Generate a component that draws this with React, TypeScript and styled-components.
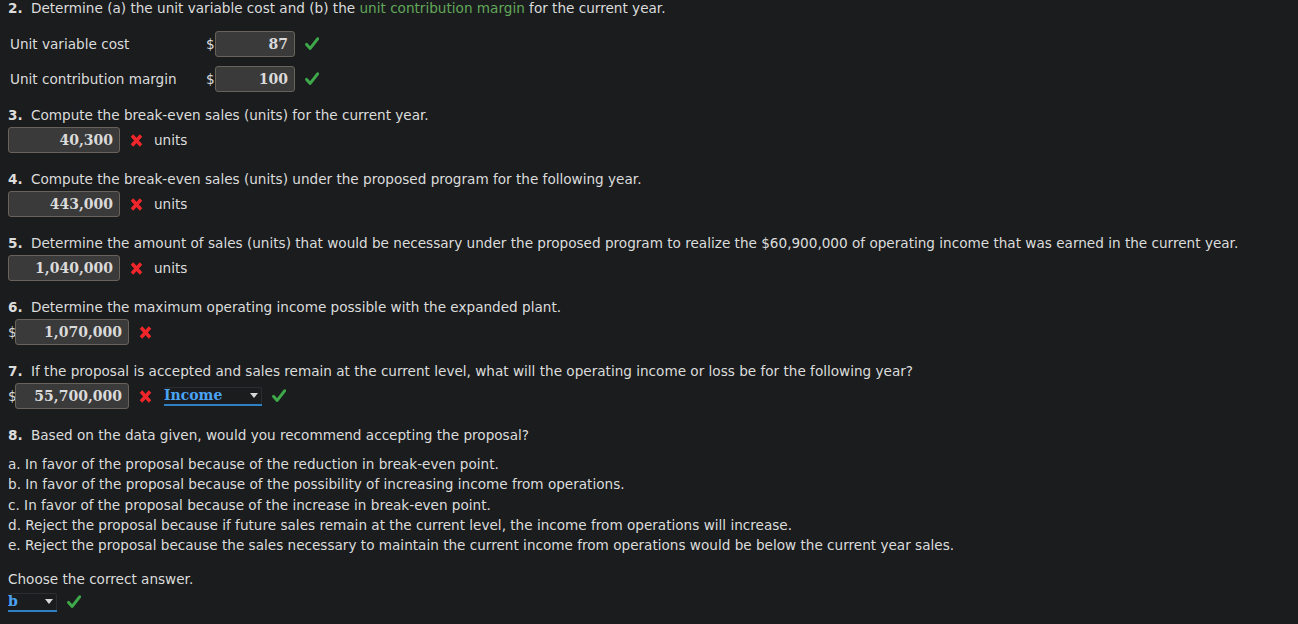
import React from "react"
import styled, { createGlobalStyle } from "styled-components"

const GlobalStyle = createGlobalStyle`
  body {
    margin: 0;
    background: #1b1c1e;
    color: #dcdcdc;
    font-family: "DejaVu Sans", Verdana, sans-serif;
    font-size: 13.6px;
  }
`

const Check = () => (
  <svg width="14" height="14" viewBox="0 0 14 14">
    <path d="M1.6 7.4 L5.2 11.4 L12.6 1.8" fill="none" stroke="#3ea84a" strokeWidth="3" strokeLinecap="round" strokeLinejoin="round" />
  </svg>
)

const Cross = () => (
  <svg width="13" height="13" viewBox="0 0 13 13">
    <path d="M2 1.5 L11 11.5 M11 1.5 L2 11.5" fill="none" stroke="#f0262a" strokeWidth="3.4" />
  </svg>
)

const App = () => {
  return (
    <>
      <GlobalStyle />
      <Page>
        <Heading>
          <Num>2.</Num> Determine (a) the unit variable cost and (b) the{" "}
          <Term>unit contribution margin</Term> for the current year.
        </Heading>
        <Table>
          <Label>Unit variable cost</Label>
          <Dollar>$</Dollar>
          <Input width={80}>87</Input>
          <Mark><Check /></Mark>
          <Label>Unit contribution margin</Label>
          <Dollar>$</Dollar>
          <Input width={80}>100</Input>
          <Mark><Check /></Mark>
        </Table>

        <Section>
          <Heading>
            <Num>3.</Num> Compute the break-even sales (units) for the current year.
          </Heading>
          <AnswerRow>
            <Input width={112}>40,300</Input>
            <Mark><Cross /></Mark>
            <Unit>units</Unit>
          </AnswerRow>
        </Section>

        <Section>
          <Heading>
            <Num>4.</Num> Compute the break-even sales (units) under the proposed program for the following year.
          </Heading>
          <AnswerRow>
            <Input width={112}>443,000</Input>
            <Mark><Cross /></Mark>
            <Unit>units</Unit>
          </AnswerRow>
        </Section>

        <Section>
          <Heading>
            <Num>5.</Num> Determine the amount of sales (units) that would be necessary under the proposed program to realize the $60,900,000 of operating income that was earned in the current year.
          </Heading>
          <AnswerRow>
            <Input width={112}>1,040,000</Input>
            <Mark><Cross /></Mark>
            <Unit>units</Unit>
          </AnswerRow>
        </Section>

        <Section>
          <Heading>
            <Num>6.</Num> Determine the maximum operating income possible with the expanded plant.
          </Heading>
          <AnswerRow>
            <SmallDollar>$</SmallDollar>
            <Input width={114}>1,070,000</Input>
            <Mark><Cross /></Mark>
          </AnswerRow>
        </Section>

        <Section>
          <Heading>
            <Num>7.</Num> If the proposal is accepted and sales remain at the current level, what will the operating income or loss be for the following year?
          </Heading>
          <AnswerRow>
            <SmallDollar>$</SmallDollar>
            <Input width={114}>55,700,000</Input>
            <Mark><Cross /></Mark>
            <Select width={98} offset={12}>
              <span>Income</span>
              <Arrow />
            </Select>
            <Mark><Check /></Mark>
          </AnswerRow>
        </Section>

        <Section>
          <Heading>
            <Num>8.</Num> Based on the data given, would you recommend accepting the proposal?
          </Heading>
          <Options>
            <li>a. In favor of the proposal because of the reduction in break-even point.</li>
            <li>b. In favor of the proposal because of the possibility of increasing income from operations.</li>
            <li>c. In favor of the proposal because of the increase in break-even point.</li>
            <li>d. Reject the proposal because if future sales remain at the current level, the income from operations will increase.</li>
            <li>e. Reject the proposal because the sales necessary to maintain the current income from operations would be below the current year sales.</li>
          </Options>
          <Prompt>Choose the correct answer.</Prompt>
          <ChoiceRow>
            <Select width={49} offset={0}>
              <span>b</span>
              <Arrow />
            </Select>
            <Mark><Check /></Mark>
          </ChoiceRow>
        </Section>
      </Page>
    </>
  )
}

export default App

const Page = styled.div`
  padding: 0 8px;
  width: 1282px;
  height: 624px;
  overflow: hidden;
`

const Heading = styled.div`
  line-height: 16px;
  white-space: nowrap;
`

const Num = styled.b`
  font-weight: bold;
  margin-right: 4px;
`

const Term = styled.span`
  color: #62a85a;
`

const Table = styled.div`
  display: grid;
  grid-template-columns: 196px 9px auto auto;
  justify-content: start;
  align-items: center;
  row-gap: 9px;
  margin-top: 15px;
  padding-left: 2px;
`

const Label = styled.div`
  line-height: 26px;
`

const Dollar = styled.span`
  color: #dcdcdc;
`

const SmallDollar = styled.span`
  width: 7px;
  color: #dcdcdc;
`

const Section = styled.div`
  margin-top: 15px;

  & + & {
    margin-top: 18px;
  }
`

const AnswerRow = styled.div`
  display: flex;
  align-items: center;
  margin-top: 4px;
  height: 26px;
`

const ChoiceRow = styled.div`
  display: flex;
  align-items: center;
  margin-top: 5px;
  height: 20px;
`

const Input = styled.div<{ width: number }>`
  box-sizing: border-box;
  width: ${({ width }) => width}px;
  height: 26px;
  padding: 0 6px;
  display: flex;
  align-items: center;
  justify-content: flex-end;
  background: #3a3a3a;
  border: 1px solid #67635a;
  border-radius: 3px;
  color: #dadada;
  font-family: "DejaVu Serif", Georgia, serif;
  font-weight: bold;
  font-size: 14px;
`

const Mark = styled.span`
  display: flex;
  align-items: center;
  margin-left: 10px;
`

const Unit = styled.span`
  margin-left: 11px;
`

const Select = styled.div<{ width: number; offset: number }>`
  box-sizing: border-box;
  width: ${({ width }) => width}px;
  height: 19px;
  margin-left: ${({ offset }) => offset}px;
  padding: 0 4px 0 0;
  display: flex;
  align-items: center;
  justify-content: space-between;
  border-bottom: 2px solid #2f7fc4;
  border-radius: 3px 3px 0 0;
  box-shadow: inset 0 1px 0 #2c2d30, inset -1px 0 0 #2c2d30;
  color: #4aa3f5;
  font-family: "DejaVu Serif", Georgia, serif;
  font-weight: bold;
  font-size: 14px;
`

const Arrow = styled.span`
  width: 0;
  height: 0;
  border-left: 4px solid transparent;
  border-right: 4px solid transparent;
  border-top: 5px solid #d8d8d8;
`

const Options = styled.ul`
  list-style: none;
  margin: 11px 0 0;
  padding: 0;
  line-height: 20.25px;
  white-space: nowrap;
`

const Prompt = styled.div`
  margin-top: 16px;
  line-height: 16px;
`
